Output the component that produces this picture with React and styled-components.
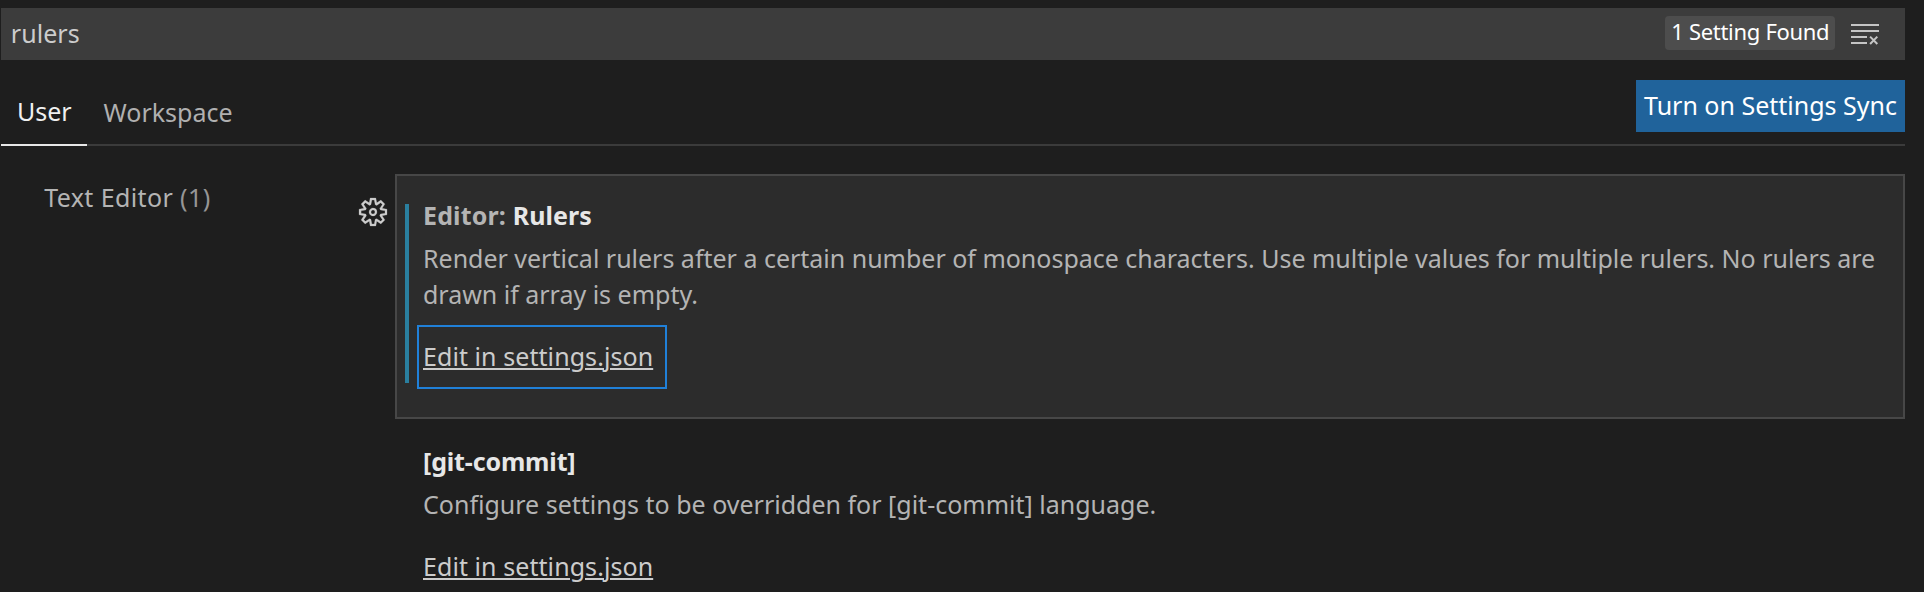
import React from 'react';
import styled, { createGlobalStyle } from 'styled-components';
import { VscSettingsGear } from 'react-icons/vsc';

const GlobalStyle = createGlobalStyle`
  * { box-sizing: border-box; }
  body { margin: 0; background: #1e1e1e; overflow: hidden; }
`;

const Editor = styled.main`
  height: 100vh;
  padding: 8px 19px 0 1px;
  overflow: hidden;
  background: #1e1e1e;
  color: #b4b4b4;
  font: 25px/36px "Noto Sans", "Open Sans", sans-serif;
`;

const SearchBar = styled.div`
  display: flex;
  align-items: flex-start;
  height: 52px;
  padding-left: 9.8px;
  background: #3c3c3c;
  color: #cccccc;
`;

const Query = styled.span`
  flex: 1;
  line-height: 51px;
  letter-spacing: 0.05px;
`;

const CountBadge = styled.span`
  width: 170px;
  height: 34px;
  margin: 8px 14px 0 0;
  padding-left: 6.2px;
  border-radius: 4px;
  background: #4d4d4d;
  color: #ffffff;
  font-size: 22px;
  line-height: 31px;
  letter-spacing: -0.3px;
  white-space: nowrap;
`;

const ClearButton = styled.span`
  display: flex;
  width: 32px;
  height: 32px;
  margin: 10px 24px 0 0;
  color: #c5c5c5;
`;

const Header = styled.header`
  display: flex;
  height: 86px;
  border-bottom: 2px solid #3b3b3b;
`;

const Tab = styled.div`
  height: 86px;
  padding: 0 ${p => (p.$active ? 0 : 17)}px 0 ${p => (p.$active ? 16 : 16.5)}px;
  width: ${p => (p.$active ? '86px' : 'auto')};
  border-bottom: 2px solid ${p => (p.$active ? '#e7e7e7' : 'transparent')};
  color: ${p => (p.$active ? '#f0f0f0' : '#b0b0b0')};
  line-height: ${p => (p.$active ? 102 : 104)}px;
`;

const SyncButton = styled.button`
  width: 269px;
  height: 52px;
  margin: 20px 0 0 auto;
  padding: 0 0 2px;
  border: 0;
  background: #20639b;
  color: #ffffff;
  font: inherit;
  white-space: nowrap;
`;

const Body = styled.div`
  display: flex;
  padding-top: 28px;
`;

const Toc = styled.nav`
  width: 356px;
  padding: 5px 0 0 43.2px;
  letter-spacing: 0.39px;
`;

const TocCount = styled.span`
  color: #969696;
`;

const GearColumn = styled.div`
  width: 38px;
  padding: 24px 0 0 2px;
  color: #cccccc;
`;

const GearIcon = styled(VscSettingsGear)`
  display: block;
  width: 28px;
  height: 28px;
  overflow: visible;
  stroke: currentColor;
  stroke-width: 0.2;
`;

const SettingList = styled.section`
  flex: 1;
  display: flex;
  flex-direction: column;
  gap: 1px;
`;

const Setting = styled.article`
  display: flex;
  gap: 14px;
  height: 245px;
  padding-left: 8px;
  border: 2px solid ${p => (p.$focused ? '#474747' : 'transparent')};
  background: ${p => (p.$focused ? '#2c2c2c' : 'transparent')};
`;

const ModifiedBar = styled.div`
  width: 4px;
  height: 179px;
  margin-top: 28px;
  background: ${p => (p.$visible ? '#2a7f9f' : 'transparent')};
`;

const SettingContent = styled.div`
  flex: 1;
  padding: 24px 14px 0 0;
`;

const Title = styled.h3`
  margin: 0 0 10px;
  color: #e7e7e7;
  font-size: 25px;
  line-height: 30px;
  letter-spacing: ${p => p.$spacing}px;
`;

const Category = styled.span`
  color: #b4b4b4;
  letter-spacing: 0.15px;
`;

const Description = styled.p`
  margin: 0 0 13px;
  letter-spacing: ${p => p.$spacing || 0}px;
`;

const EditLink = styled.a`
  display: block;
  width: 250px;
  height: 64px;
  margin-left: -6px;
  padding-left: 4px;
  border: 2px solid ${p => (p.$focused ? '#2080d8' : 'transparent')};
  color: #cccccc;
  line-height: 59px;
  letter-spacing: 0.07px;
  text-decoration: underline;
  text-decoration-thickness: 2px;
  text-underline-offset: 2px;
`;

function ClearAllIcon() {
  return (
    <svg width="32" height="32" viewBox="0 0 32 32" fill="none" stroke="currentColor" strokeWidth="2">
      <path d="M2 7h28M2 13h28M2 19h16M2 25h16" />
      <path d="M21.1 18.6l7.2 7.4M28.3 18.6l-7.2 7.4" />
    </svg>
  );
}

export default function App() {
  return (
    <Editor>
      <GlobalStyle />
      <SearchBar>
        <Query>rulers</Query>
        <CountBadge>1 Setting Found</CountBadge>
        <ClearButton><ClearAllIcon /></ClearButton>
      </SearchBar>
      <Header>
        <Tab $active>User</Tab>
        <Tab>Workspace</Tab>
        <SyncButton>Turn on Settings Sync</SyncButton>
      </Header>
      <Body>
        <Toc>Text Editor <TocCount>(1)</TocCount></Toc>
        <GearColumn><GearIcon /></GearColumn>
        <SettingList>
          <Setting $focused>
            <ModifiedBar $visible />
            <SettingContent>
              <Title $spacing={0.1}><Category>Editor: </Category>Rulers</Title>
              <Description $spacing={-0.01}>
                Render vertical rulers after a certain number of monospace characters. Use multiple values for multiple rulers. No rulers are drawn if array is empty.
              </Description>
              <EditLink $focused>Edit in settings.json</EditLink>
            </SettingContent>
          </Setting>
          <Setting>
            <ModifiedBar />
            <SettingContent>
              <Title $spacing={-0.15}>[git-commit]</Title>
              <Description>Configure settings to be overridden for [git-commit] language.</Description>
              <EditLink>Edit in settings.json</EditLink>
            </SettingContent>
          </Setting>
        </SettingList>
      </Body>
    </Editor>
  );
}
